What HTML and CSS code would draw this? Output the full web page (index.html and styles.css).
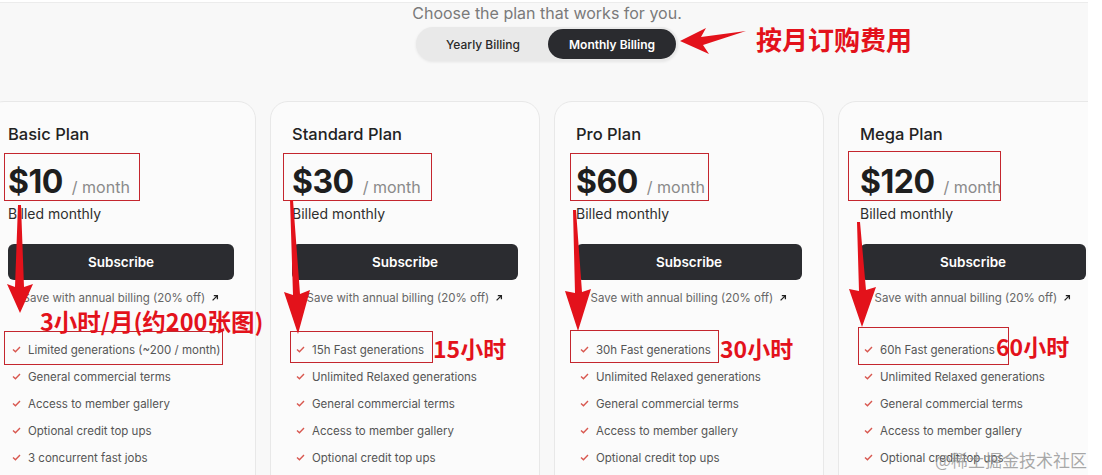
FILE: index.html
```html
<!DOCTYPE html>
<html lang="en">
<head>
<meta charset="utf-8">
<title>Pricing</title>
<link rel="stylesheet" href="styles.css">
</head>
<body>
<div class="page">
  <div class="wrap">
    <p class="lead">Choose the plan that works for you.</p>
    <div class="toggle">
      <span class="opt">Yearly Billing</span>
      <span class="opt opt-on">Monthly Billing</span>
    </div>
    <div class="cards">
      <div class="card c1">
        <h3 class="plan">Basic Plan</h3>
        <div class="price"><span class="amt">$10</span><span class="per">/ month</span></div>
        <div class="billed">Billed monthly</div>
        <button class="sub">Subscribe</button>
        <div class="save">Save with annual billing (20% off) <svg class="ext" viewBox="0 0 10 10"><path d="M2 8 L8 2 M3.5 2 H8 V6.5" fill="none" stroke="#222" stroke-width="1.6"/></svg></div>
        <ul class="feats">
          <li><svg class="chk" viewBox="0 0 10 8"><path d="M1 4 L3.8 6.6 L9 1.2" fill="none" stroke="#d8574f" stroke-width="1.6"/></svg>Limited generations (~200 / month)</li>
          <li><svg class="chk" viewBox="0 0 10 8"><path d="M1 4 L3.8 6.6 L9 1.2" fill="none" stroke="#d8574f" stroke-width="1.6"/></svg>General commercial terms</li>
          <li><svg class="chk" viewBox="0 0 10 8"><path d="M1 4 L3.8 6.6 L9 1.2" fill="none" stroke="#d8574f" stroke-width="1.6"/></svg>Access to member gallery</li>
          <li><svg class="chk" viewBox="0 0 10 8"><path d="M1 4 L3.8 6.6 L9 1.2" fill="none" stroke="#d8574f" stroke-width="1.6"/></svg>Optional credit top ups</li>
          <li><svg class="chk" viewBox="0 0 10 8"><path d="M1 4 L3.8 6.6 L9 1.2" fill="none" stroke="#d8574f" stroke-width="1.6"/></svg>3 concurrent fast jobs</li>
        </ul>
        <span class="box box-price"></span>
        <span class="box box-feat"></span>
        <span class="note note-feat">3小时/月(约200张图)</span>
      </div>
      <div class="card c2">
        <h3 class="plan">Standard Plan</h3>
        <div class="price"><span class="amt">$30</span><span class="per">/ month</span></div>
        <div class="billed">Billed monthly</div>
        <button class="sub">Subscribe</button>
        <div class="save">Save with annual billing (20% off) <svg class="ext" viewBox="0 0 10 10"><path d="M2 8 L8 2 M3.5 2 H8 V6.5" fill="none" stroke="#222" stroke-width="1.6"/></svg></div>
        <ul class="feats">
          <li><svg class="chk" viewBox="0 0 10 8"><path d="M1 4 L3.8 6.6 L9 1.2" fill="none" stroke="#d8574f" stroke-width="1.6"/></svg>15h Fast generations</li>
          <li><svg class="chk" viewBox="0 0 10 8"><path d="M1 4 L3.8 6.6 L9 1.2" fill="none" stroke="#d8574f" stroke-width="1.6"/></svg>Unlimited Relaxed generations</li>
          <li><svg class="chk" viewBox="0 0 10 8"><path d="M1 4 L3.8 6.6 L9 1.2" fill="none" stroke="#d8574f" stroke-width="1.6"/></svg>General commercial terms</li>
          <li><svg class="chk" viewBox="0 0 10 8"><path d="M1 4 L3.8 6.6 L9 1.2" fill="none" stroke="#d8574f" stroke-width="1.6"/></svg>Access to member gallery</li>
          <li><svg class="chk" viewBox="0 0 10 8"><path d="M1 4 L3.8 6.6 L9 1.2" fill="none" stroke="#d8574f" stroke-width="1.6"/></svg>Optional credit top ups</li>
        </ul>
        <span class="box box-price"></span>
        <span class="box box-feat"></span>
        <span class="note note-feat">15小时</span>
      </div>
      <div class="card c3">
        <h3 class="plan">Pro Plan</h3>
        <div class="price"><span class="amt">$60</span><span class="per">/ month</span></div>
        <div class="billed">Billed monthly</div>
        <button class="sub">Subscribe</button>
        <div class="save">Save with annual billing (20% off) <svg class="ext" viewBox="0 0 10 10"><path d="M2 8 L8 2 M3.5 2 H8 V6.5" fill="none" stroke="#222" stroke-width="1.6"/></svg></div>
        <ul class="feats">
          <li><svg class="chk" viewBox="0 0 10 8"><path d="M1 4 L3.8 6.6 L9 1.2" fill="none" stroke="#d8574f" stroke-width="1.6"/></svg>30h Fast generations</li>
          <li><svg class="chk" viewBox="0 0 10 8"><path d="M1 4 L3.8 6.6 L9 1.2" fill="none" stroke="#d8574f" stroke-width="1.6"/></svg>Unlimited Relaxed generations</li>
          <li><svg class="chk" viewBox="0 0 10 8"><path d="M1 4 L3.8 6.6 L9 1.2" fill="none" stroke="#d8574f" stroke-width="1.6"/></svg>General commercial terms</li>
          <li><svg class="chk" viewBox="0 0 10 8"><path d="M1 4 L3.8 6.6 L9 1.2" fill="none" stroke="#d8574f" stroke-width="1.6"/></svg>Access to member gallery</li>
          <li><svg class="chk" viewBox="0 0 10 8"><path d="M1 4 L3.8 6.6 L9 1.2" fill="none" stroke="#d8574f" stroke-width="1.6"/></svg>Optional credit top ups</li>
        </ul>
        <span class="box box-price"></span>
        <span class="box box-feat"></span>
        <span class="note note-feat">30小时</span>
      </div>
      <div class="card c4">
        <h3 class="plan">Mega Plan</h3>
        <div class="price"><span class="amt">$120</span><span class="per">/ month</span></div>
        <div class="billed">Billed monthly</div>
        <button class="sub">Subscribe</button>
        <div class="save">Save with annual billing (20% off) <svg class="ext" viewBox="0 0 10 10"><path d="M2 8 L8 2 M3.5 2 H8 V6.5" fill="none" stroke="#222" stroke-width="1.6"/></svg></div>
        <ul class="feats">
          <li><svg class="chk" viewBox="0 0 10 8"><path d="M1 4 L3.8 6.6 L9 1.2" fill="none" stroke="#d8574f" stroke-width="1.6"/></svg>60h Fast generations</li>
          <li><svg class="chk" viewBox="0 0 10 8"><path d="M1 4 L3.8 6.6 L9 1.2" fill="none" stroke="#d8574f" stroke-width="1.6"/></svg>Unlimited Relaxed generations</li>
          <li><svg class="chk" viewBox="0 0 10 8"><path d="M1 4 L3.8 6.6 L9 1.2" fill="none" stroke="#d8574f" stroke-width="1.6"/></svg>General commercial terms</li>
          <li><svg class="chk" viewBox="0 0 10 8"><path d="M1 4 L3.8 6.6 L9 1.2" fill="none" stroke="#d8574f" stroke-width="1.6"/></svg>Access to member gallery</li>
          <li><svg class="chk" viewBox="0 0 10 8"><path d="M1 4 L3.8 6.6 L9 1.2" fill="none" stroke="#d8574f" stroke-width="1.6"/></svg>Optional credit top ups</li>
        </ul>
        <span class="box box-price"></span>
        <span class="box box-feat"></span>
        <span class="note note-feat">60小时</span>
      </div>
    </div>
  </div>
</div>

<svg class="arrows" viewBox="0 0 1102 475" width="1102" height="475">
  <polygon fill="#e3121b" points="680,41 706,28 701,37 746,31 703,45 709,54"/>
  <polygon fill="#e3121b" points="18,205 21,205 24,287 33,284 20,313 7,284 15,287"/>
  <polygon fill="#e3121b" points="290,200 293,200 300,294 310,290 298,334 284,292 293,295"/>
  <polygon fill="#e3121b" points="573,210 576,210 582,292 591,289 578,331 565,291 575,293"/>
  <polygon fill="#e3121b" points="857,222 860,222 866,290 876,287 862,327 849,289 859,291"/>
</svg>
<span class="note note-top">按月订购费用</span>
<span class="watermark">@稀土掘金技术社区</span>
</body>
</html>
```

FILE: styles.css
```css
html, body {
  margin: 0;
  height: 475px;
  overflow: hidden;
}
body {
  position: relative;
  width: 1102px;
  background: #ffffff;
  font-family: "Inter", "Noto Sans", sans-serif;
  color: #222;
}
.page {
  width: 1088px;
  height: 473px;
  margin-top: 2px;
  box-sizing: border-box;
  border-top: 1px solid #ececec;
  background: #f8f8f8;
  overflow: hidden;
}
.wrap {
  width: 1094px;
  display: flex;
  flex-direction: column;
  align-items: center;
}
.lead {
  margin: 0;
  font-size: 16px;
  line-height: 20px;
  color: #7a7a7a;
}
.toggle {
  margin-top: 4px;
  width: 262px;
  height: 34px;
  box-sizing: border-box;
  padding: 2px;
  display: flex;
  background: #e9e9e9;
  border-radius: 17px;
  box-shadow: 0 1px 3px rgba(0,0,0,0.08);
}
.opt {
  flex: 1;
  display: flex;
  align-items: center;
  justify-content: center;
  font-size: 12px;
  font-weight: 500;
  color: #2a2a2a;
  border-radius: 15px;
}
.opt-on {
  flex: 0 0 128px;
  background: #2a2b2f;
  color: #fff;
  font-weight: 600;
}
.cards {
  margin-top: 40px;
  display: flex;
  gap: 14px;
}
.card {
  position: relative;
  flex: none;
  width: 270px;
  height: 420px;
  box-sizing: border-box;
  padding: 22px 21px 0;
  background: #fbfbfb;
  border: 1px solid #e8e8e8;
  border-radius: 18px;
}
.plan {
  margin: 0;
  font-size: 16.5px;
  line-height: 20px;
  font-weight: 500;
  color: #222;
}
.price {
  margin-top: 18px;
  display: flex;
  align-items: baseline;
  gap: 9px;
  line-height: 40px;
}
.amt {
  font-size: 32px;
  font-weight: 700;
  color: #1e1e1e;
  letter-spacing: -0.5px;
}
.per {
  font-size: 16px;
  color: #8a8a8a;
}
.billed {
  margin-top: -2px;
  font-size: 14px;
  line-height: 18px;
  color: #2e2e2e;
}
.sub {
  display: block;
  width: 100%;
  height: 36px;
  margin-top: 21px;
  border: 0;
  border-radius: 6px;
  background: #2b2c30;
  color: #fff;
  font-family: inherit;
  font-size: 13.5px;
  font-weight: 600;
}
.save {
  margin-top: 10px;
  font-size: 11.5px;
  line-height: 16px;
  color: #666;
  text-align: center;
}
.ext {
  width: 8px;
  height: 8px;
  margin-left: 3px;
}
.feats {
  list-style: none;
  margin: 30px 0 0;
  padding: 0 0 0 4px;
}
.feats li {
  display: flex;
  align-items: center;
  gap: 7px;
  height: 27px;
  font-size: 11.5px;
  color: #555;
}
.chk {
  width: 9px;
  height: 7px;
  flex: none;
}
.box {
  position: absolute;
  border: 1.5px solid #c4262e;
  box-sizing: border-box;
}
.box-price { top: 51px; height: 48px; }
.box-feat { top: 229px; height: 34px; }
.c1 .box-price { left: 17px; width: 136px; }
.c2 .box-price { left: 12px; width: 149px; }
.c3 .box-price { left: 15px; width: 139px; }
.c4 .box-price { left: 9px; width: 153px; top: 49px; height: 50px; }
.c1 .box-feat { left: 17px; width: 219px; }
.c2 .box-feat { left: 19px; width: 143px; height: 32px; }
.c3 .box-feat { left: 15px; width: 149px; top: 228px; height: 33px; }
.c4 .box-feat { left: 19px; width: 151px; top: 225px; height: 38px; }
.note {
  position: absolute;
  color: #e3121b;
  font-family: "Noto Sans CJK SC", "Noto Sans", sans-serif;
  font-weight: 700;
  white-space: nowrap;
  line-height: 1;
}
.note-feat { font-size: 23px; top: 235px; }
.c1 .note-feat { left: 53px; top: 208px; font-size: 23.5px; }
.c2 .note-feat { left: 162px; }
.c3 .note-feat { left: 165px; }
.c4 .note-feat { left: 157px; top: 233px; }
.note-top {
  left: 756px;
  top: 26px;
  font-size: 26px;
}
.arrows {
  position: absolute;
  left: 0;
  top: 0;
  pointer-events: none;
}
.watermark {
  position: absolute;
  left: 935px;
  top: 447px;
  font-family: "Noto Sans CJK SC", sans-serif;
  font-size: 17px;
  color: rgba(140,140,140,0.75);
  white-space: nowrap;
}
```
